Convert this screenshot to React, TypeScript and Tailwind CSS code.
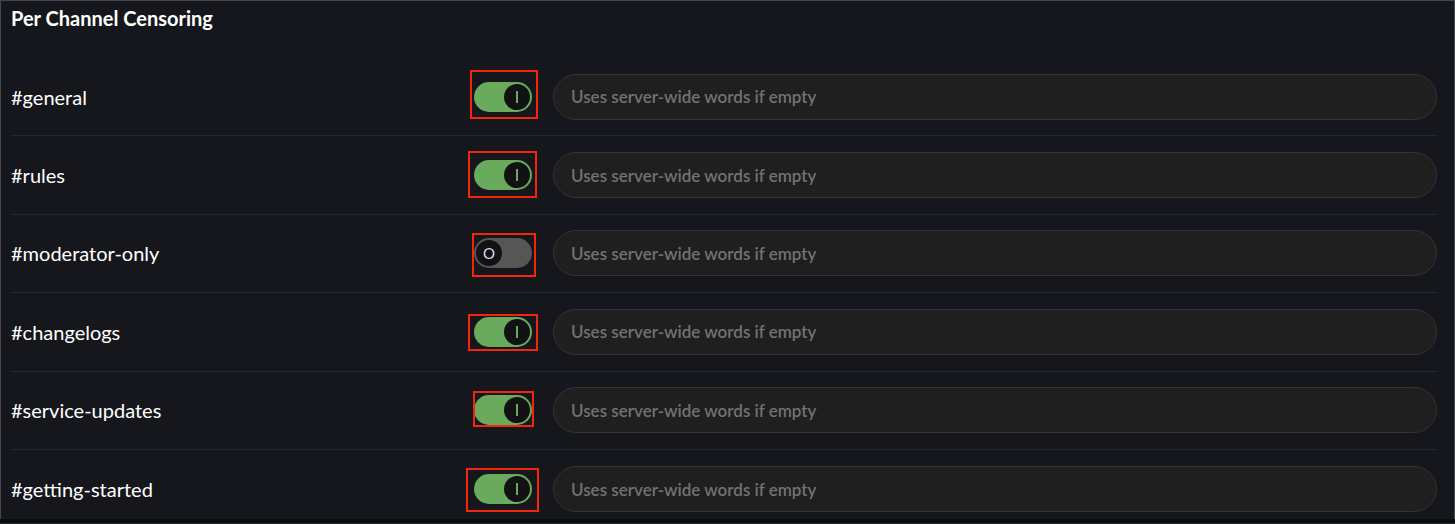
import { useState } from 'react';

interface Channel {
  name: string;
  enabled: boolean;
  // annotation box drawn round the toggle in the screenshot
  mark: string;
}

const CHANNELS: Channel[] = [
  { name: '#general', enabled: true, mark: 'left-[-4px] top-[-12px] w-[68px] h-[49px]' },
  { name: '#rules', enabled: true, mark: 'left-[-6px] top-[-9px] w-[69px] h-[47px]' },
  { name: '#moderator-only', enabled: false, mark: 'left-[-2px] top-[-5px] w-[64px] h-[44px]' },
  { name: '#changelogs', enabled: true, mark: 'left-[-6px] top-[-3px] w-[70px] h-[37px]' },
  { name: '#service-updates', enabled: true, mark: 'left-[-1px] top-[-4px] w-[61px] h-[36px]' },
  { name: '#getting-started', enabled: true, mark: 'left-[-8px] top-[-6px] w-[73px] h-[44px]' },
];

function Toggle({ on, onChange }: { on: boolean; onChange: () => void }) {
  return (
    <button
      type="button"
      onClick={onChange}
      className={`flex w-[58px] h-[30px] shrink-0 items-center rounded-full p-[2px] ${
        on ? 'justify-end bg-[#6aaa5c]' : 'justify-start bg-[#565656]'
      }`}
    >
      <span className="flex w-[26px] h-[26px] items-center justify-center rounded-full bg-[#121214]">
        {on ? (
          <span className="block w-[2px] h-[12px] bg-[#6aaa5c]" />
        ) : (
          <span className="text-[15px] leading-none text-[#d6dbea]">O</span>
        )}
      </span>
    </button>
  );
}

export default function App() {
  const [channels, setChannels] = useState(CHANNELS);

  const toggle = (i: number) =>
    setChannels((list) => list.map((c, j) => (j === i ? { ...c, enabled: !c.enabled } : c)));

  return (
    <div
      className="flex h-[524px] w-full flex-col bg-[#0d0e11]"
      style={{ fontFamily: 'Lato, "Noto Sans", "Liberation Sans", sans-serif' }}
    >
      <div className="flex h-[519px] flex-col overflow-hidden border-x border-t border-[#45464b] bg-[#16171c] pl-[10px] pr-[17px]">
        <div className="h-[57px] shrink-0 pt-[5px]">
          <h2 className="text-[20px] font-bold leading-6 text-white">Per Channel Censoring</h2>
        </div>
        {channels.map((c, i) => (
          <div
            key={c.name}
            className={`flex h-[78.4px] shrink-0 items-center ${
              i < channels.length - 1 ? 'border-b border-[#25262b]' : ''
            }`}
          >
            <span className="w-[463px] shrink-0 text-[20px] text-white">{c.name}</span>
            <div className="relative">
              <Toggle on={c.enabled} onChange={() => toggle(i)} />
              <div className={`pointer-events-none absolute border-2 border-[#f3250d] ${c.mark}`} />
            </div>
            <input
              placeholder="Uses server-wide words if empty"
              className="ml-[21px] h-[46px] flex-1 rounded-full border border-[#333336] bg-[#1f1f1f] px-[17px] text-[17px] font-semibold text-white outline-none placeholder:text-[#727272]"
            />
          </div>
        ))}
      </div>
      <div className="h-[4px] bg-[#0b0c0f]" />
      <div className="h-[1px] bg-[#2a2b2f]" />
    </div>
  );
}
